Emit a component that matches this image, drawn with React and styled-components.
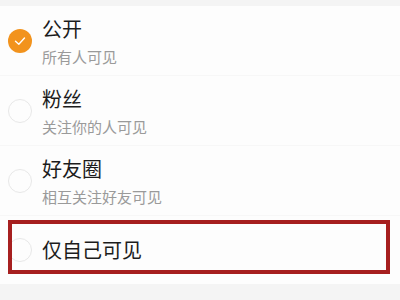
import React from 'react';
import styled, { createGlobalStyle } from 'styled-components';

const GlobalStyle = createGlobalStyle`
  html, body {
    margin: 0;
    padding: 0;
    background: #f4f4f4;
    font-family: "Noto Sans CJK SC", "Noto Sans", sans-serif;
  }
`;

const Page = styled.div`
  width: 400px;
  height: 300px;
  overflow: hidden;
  background: #f4f4f4;
  padding-top: 6px;
  box-sizing: border-box;
`;

const List = styled.ul`
  list-style: none;
  margin: 0;
  padding: 0;
  background: #fdfdfd;
`;

const Row = styled.li`
  position: relative;
  display: flex;
  align-items: center;
  gap: 10px;
  height: ${props => props.height || 70}px;
  padding-left: 8px;
  box-sizing: border-box;
  border-bottom: ${props => (props.last ? 'none' : '1px solid #f7f7f7')};
`;

const Radio = styled.span`
  flex: none;
  width: 24px;
  height: 24px;
  border-radius: 50%;
  box-sizing: border-box;
  display: flex;
  align-items: center;
  justify-content: center;
  background: ${props => (props.checked ? '#f2931d' : '#fdfdfd')};
  border: ${props => (props.checked ? 'none' : '1px solid #e8e8e8')};
`;

const Text = styled.div`
  display: flex;
  flex-direction: column;
  gap: 5px;
  padding-top: 2px;
`;

const Title = styled.div`
  font-size: 20px;
  line-height: 26px;
  color: #1c1c1c;
`;

const Sub = styled.div`
  font-size: 15px;
  line-height: 20px;
  color: #9a9a9a;
`;

const Highlight = styled.div`
  position: absolute;
  left: 8px;
  top: 4px;
  width: 382px;
  height: 54px;
  box-sizing: border-box;
  border: 4px solid #a61f1f;
  pointer-events: none;
`;

const Check = () => (
  <svg width="14" height="14" viewBox="0 0 14 14">
    <path d="M2.5 7.2 L5.8 10.2 L11.5 4" fill="none" stroke="#fff" strokeWidth="1.4" strokeLinecap="round" strokeLinejoin="round" />
  </svg>
);

const options = [
  { title: '公开', sub: '所有人可见', checked: true },
  { title: '粉丝', sub: '关注你的人可见' },
  { title: '好友圈', sub: '相互关注好友可见' },
];

export default function App() {
  return (
    <Page>
      <GlobalStyle />
      <List>
        {options.map(o => (
          <Row key={o.title}>
            <Radio checked={o.checked}>{o.checked && <Check />}</Radio>
            <Text>
              <Title>{o.title}</Title>
              <Sub>{o.sub}</Sub>
            </Text>
          </Row>
        ))}
        <Row height={68} last>
          <Radio />
          <Title>仅自己可见</Title>
          <Highlight />
        </Row>
      </List>
    </Page>
  );
}
